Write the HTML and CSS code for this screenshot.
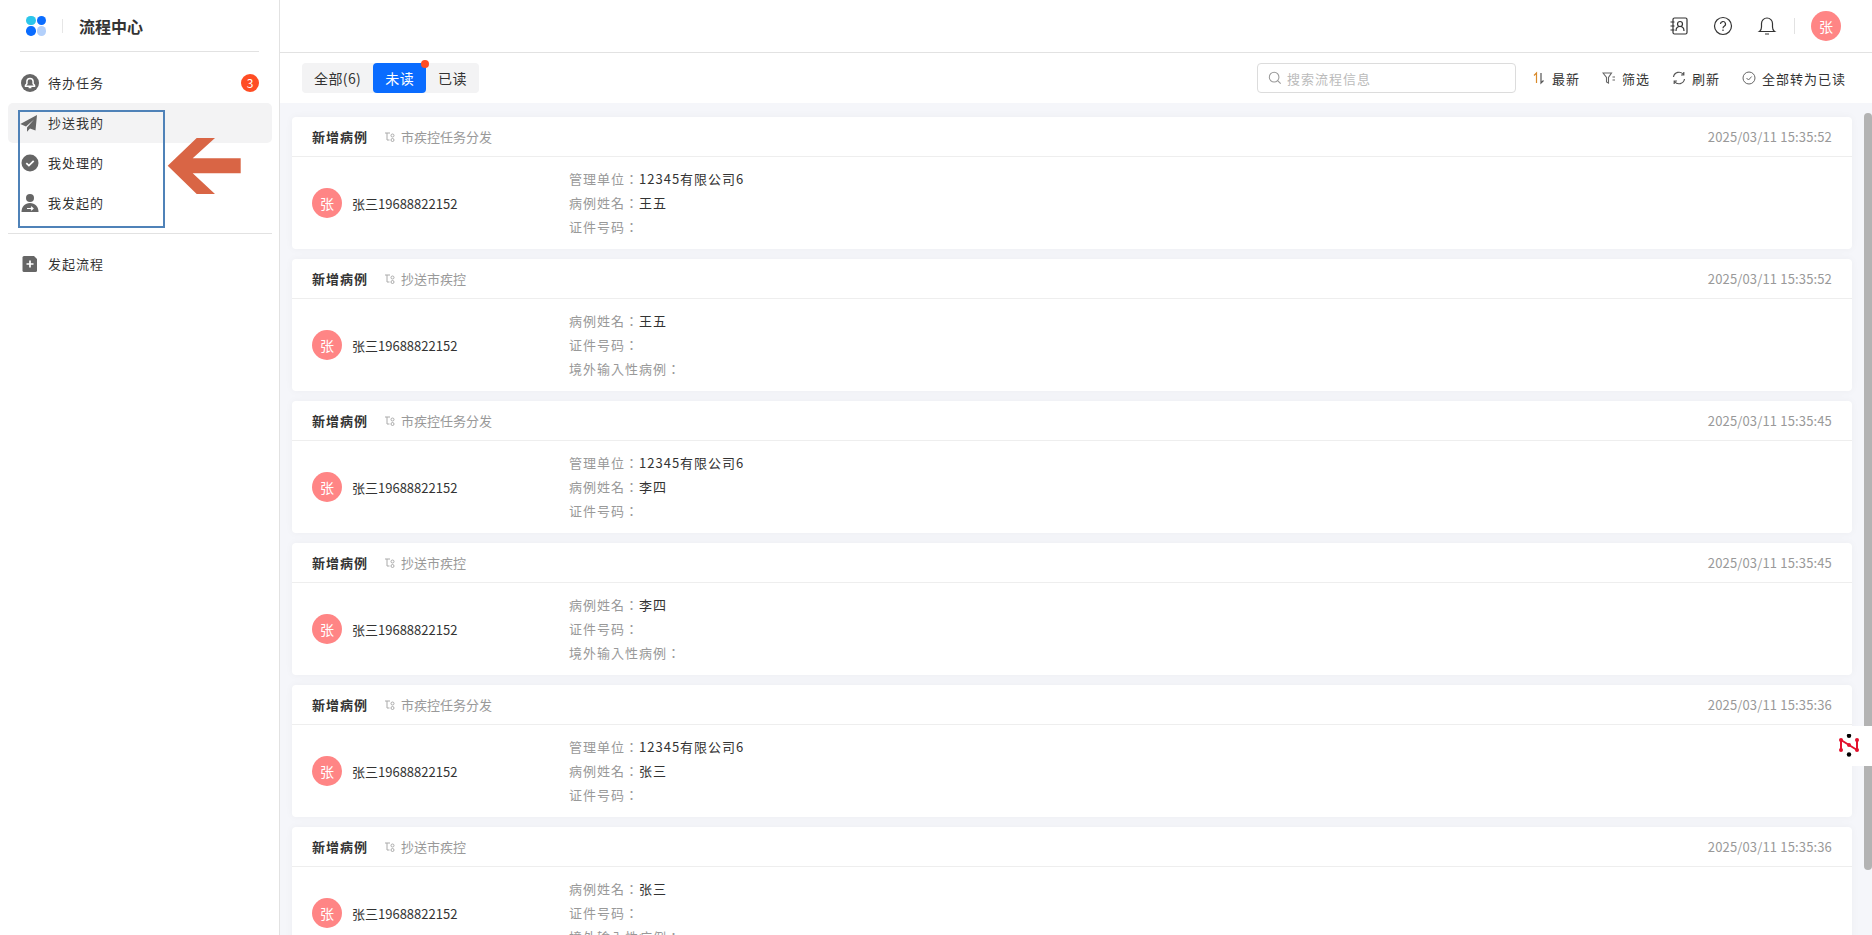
FILE: index.html
```html
<!DOCTYPE html>
<html lang="zh-CN">

<head>
  <meta charset="UTF-8">
  <title>流程中心</title>
  <link rel="stylesheet" href="styles.css">
</head>

<body>
  <aside class="sidebar">
    <div class="brand">
      <div class="logo"><i class="dot-a"></i><i class="dot-b"></i><i class="dot-b"></i><i class="dot-c"></i></div>
      <span class="brand-line"></span>
      <span class="brand-name">流程中心</span>
    </div>
    <nav class="menu">
      <a class="menu-item">
        <svg class="menu-icon" viewBox="0 0 20 20"><circle cx="10" cy="10" r="9" fill="#666"/><path d="M5.500 13.200h9v-1l-1.400-1.500V8.600a3.100 3.100 0 0 0-6.200 0v2.100l-1.400 1.500z" fill="none" stroke="#fff" stroke-width="1.500"/><path d="M8.600 14.600h2.800" stroke="#fff" stroke-width="1.300"/></svg>
        <span>待办任务</span>
        <b class="count">3</b>
      </a>
      <a class="menu-item active">
        <svg class="menu-icon" viewBox="0 0 20 20"><path d="M17 2 .3 11l5.700 2.500L14 6.500 7 14.500v4.300l3-3.300 5.500 2z" fill="#666"/></svg>
        <span>抄送我的</span>
      </a>
      <a class="menu-item">
        <svg class="menu-icon" viewBox="0 0 20 20"><circle cx="10" cy="10" r="8.500" fill="#666"/><path d="m6.300 10.200 2.600 2.400 4.800-4.700" fill="none" stroke="#fff" stroke-width="1.800"/></svg>
        <span>我处理的</span>
      </a>
      <a class="menu-item">
        <svg class="menu-icon" viewBox="0 0 20 20"><circle cx="10" cy="5" r="4" fill="#666"/><path d="M1.500 19c0-5.500 3.500-9 8.500-9s8.500 3.500 8.500 9z" fill="#666"/><path d="M7 15.500h6m-2-1.800 2 1.800-2 1.800" fill="none" stroke="#fff" stroke-width="1.200"/></svg>
        <span>我发起的</span>
      </a>
    </nav>
    <div class="menu-line"></div>
    <nav class="menu">
      <a class="menu-item">
        <svg class="menu-icon" viewBox="0 0 20 20"><path d="M4 2h10l3 3v11.500a1.500 1.500 0 0 1-1.500 1.500h-11.500a1.500 1.500 0 0 1-1.500-1.500V3.500A1.500 1.500 0 0 1 4 2z" fill="#666"/><path d="M10 6.500v7M6.500 10h7" stroke="#fff" stroke-width="1.700"/></svg>
        <span>发起流程</span>
      </a>
    </nav>
    <div class="mark-box"></div>
    <svg class="mark-arrow" viewBox="0 0 74 58"><path d="M.7 28.700 29.700 1H48L25.700 21.300h48v15h-48L48 57H29.700z" fill="#d96545"/></svg>
  </aside>

  <main class="main">
    <header class="topbar">
      <svg class="top-icon" viewBox="0 0 20 20" fill="none" stroke="#333" stroke-width="1.200"><rect x="4" y="2" width="14" height="16" rx="1.500"/><circle cx="11" cy="8" r="2.500"/><path d="M7 15c0-3 1.500-4.500 4-4.500s4 1.500 4 4.500M1.500 6h4M1.500 10h4M1.500 14h4"/></svg>
      <svg class="top-icon" viewBox="0 0 20 20" fill="none" stroke="#333" stroke-width="1.200"><circle cx="10" cy="10" r="8.500"/><path d="M7.500 8a2.500 2.500 0 1 1 3.700 2.200c-.8.500-1.200 1-1.200 2"/><path d="M10 13.500v1.500"/></svg>
      <svg class="top-icon" viewBox="0 0 20 20" fill="none" stroke="#333" stroke-width="1.200"><path d="M2.500 15.500h15c-1.500-1-2-2.500-2-4.500V7.500a5.500 5.500 0 0 0-11 0V11c0 2-.5 3.500-2 4.500zM8 18h4"/></svg>
      <span class="top-line"></span>
      <span class="avatar">张</span>
    </header>

    <div class="toolbar">
      <div class="tabs">
        <span class="tab">全部(6)</span>
        <span class="tab on">未读<i class="tab-dot"></i></span>
        <span class="tab">已读</span>
      </div>
      <div class="tools">
        <div class="search">
          <svg class="search-icon" viewBox="0 0 16 16" fill="none" stroke="#999" stroke-width="1.200"><circle cx="7" cy="7" r="5.500"/><path d="m11 11 3.500 3.500"/></svg>
          <span>搜索流程信息</span>
        </div>
        <span class="tool">
          <svg viewBox="0 0 14 14" fill="none" stroke-width="1.200"><path d="M2 4.500 4.500 2v10" stroke="#d98a2b"/><path d="M9 2v10l2.500-2.500" stroke="#555"/></svg>
          最新
        </span>
        <span class="tool">
          <svg viewBox="0 0 14 14" fill="none" stroke="#666" stroke-width="1.100"><path d="M1 2h8.500L6.500 6.500V12L4.500 11V6.500zM10.500 6H13M10.500 9H13"/></svg>
          筛选
        </span>
        <span class="tool">
          <svg viewBox="0 0 14 14" fill="none" stroke="#555" stroke-width="1.200"><path d="M1.500 6A5.600 5.600 0 0 1 11.500 3.500M12.500 8A5.600 5.600 0 0 1 2.500 10.500M11.800 1v3H9M2.200 13v-3H5"/></svg>
          刷新
        </span>
        <span class="tool">
          <svg viewBox="0 0 14 14" fill="none" stroke="#666" stroke-width="1"><circle cx="7" cy="7" r="6"/><path d="m4.500 7 2 2 3.200-3.500"/></svg>
          全部转为已读
        </span>
      </div>
    </div>

    <div class="list">
      <section class="card">
        <div class="card-head">
          <b class="card-title">新增病例</b>
          <svg class="node-icon" viewBox="0 0 12 12" fill="none" stroke="#aaa"><path d="M1 2h5M3 2v7h2.500"/><circle cx="8.500" cy="4.500" r="1.500"/><circle cx="8.500" cy="9" r="1.500"/></svg>
          <span class="card-node">市疾控任务分发</span>
          <time class="card-time">2025/03/11 15:35:52</time>
        </div>
        <div class="card-body">
          <div class="user"><span class="avatar">张</span><span class="user-name">张三19688822152</span></div>
          <div class="fields">
            <p><span lang="zh-TW">管理单位：</span>12345有限公司6</p>
            <p><span lang="zh-TW">病例姓名：</span>王五</p>
            <p><span lang="zh-TW">证件号码：</span></p>
          </div>
        </div>
      </section>

      <section class="card">
        <div class="card-head">
          <b class="card-title">新增病例</b>
          <svg class="node-icon" viewBox="0 0 12 12" fill="none" stroke="#aaa"><path d="M1 2h5M3 2v7h2.500"/><circle cx="8.500" cy="4.500" r="1.500"/><circle cx="8.500" cy="9" r="1.500"/></svg>
          <span class="card-node">抄送市疾控</span>
          <time class="card-time">2025/03/11 15:35:52</time>
        </div>
        <div class="card-body">
          <div class="user"><span class="avatar">张</span><span class="user-name">张三19688822152</span></div>
          <div class="fields">
            <p><span lang="zh-TW">病例姓名：</span>王五</p>
            <p><span lang="zh-TW">证件号码：</span></p>
            <p><span lang="zh-TW">境外输入性病例：</span></p>
          </div>
        </div>
      </section>

      <section class="card">
        <div class="card-head">
          <b class="card-title">新增病例</b>
          <svg class="node-icon" viewBox="0 0 12 12" fill="none" stroke="#aaa"><path d="M1 2h5M3 2v7h2.500"/><circle cx="8.500" cy="4.500" r="1.500"/><circle cx="8.500" cy="9" r="1.500"/></svg>
          <span class="card-node">市疾控任务分发</span>
          <time class="card-time">2025/03/11 15:35:45</time>
        </div>
        <div class="card-body">
          <div class="user"><span class="avatar">张</span><span class="user-name">张三19688822152</span></div>
          <div class="fields">
            <p><span lang="zh-TW">管理单位：</span>12345有限公司6</p>
            <p><span lang="zh-TW">病例姓名：</span>李四</p>
            <p><span lang="zh-TW">证件号码：</span></p>
          </div>
        </div>
      </section>

      <section class="card">
        <div class="card-head">
          <b class="card-title">新增病例</b>
          <svg class="node-icon" viewBox="0 0 12 12" fill="none" stroke="#aaa"><path d="M1 2h5M3 2v7h2.500"/><circle cx="8.500" cy="4.500" r="1.500"/><circle cx="8.500" cy="9" r="1.500"/></svg>
          <span class="card-node">抄送市疾控</span>
          <time class="card-time">2025/03/11 15:35:45</time>
        </div>
        <div class="card-body">
          <div class="user"><span class="avatar">张</span><span class="user-name">张三19688822152</span></div>
          <div class="fields">
            <p><span lang="zh-TW">病例姓名：</span>李四</p>
            <p><span lang="zh-TW">证件号码：</span></p>
            <p><span lang="zh-TW">境外输入性病例：</span></p>
          </div>
        </div>
      </section>

      <section class="card">
        <div class="card-head">
          <b class="card-title">新增病例</b>
          <svg class="node-icon" viewBox="0 0 12 12" fill="none" stroke="#aaa"><path d="M1 2h5M3 2v7h2.500"/><circle cx="8.500" cy="4.500" r="1.500"/><circle cx="8.500" cy="9" r="1.500"/></svg>
          <span class="card-node">市疾控任务分发</span>
          <time class="card-time">2025/03/11 15:35:36</time>
        </div>
        <div class="card-body">
          <div class="user"><span class="avatar">张</span><span class="user-name">张三19688822152</span></div>
          <div class="fields">
            <p><span lang="zh-TW">管理单位：</span>12345有限公司6</p>
            <p><span lang="zh-TW">病例姓名：</span>张三</p>
            <p><span lang="zh-TW">证件号码：</span></p>
          </div>
        </div>
      </section>

      <section class="card">
        <div class="card-head">
          <b class="card-title">新增病例</b>
          <svg class="node-icon" viewBox="0 0 12 12" fill="none" stroke="#aaa"><path d="M1 2h5M3 2v7h2.500"/><circle cx="8.500" cy="4.500" r="1.500"/><circle cx="8.500" cy="9" r="1.500"/></svg>
          <span class="card-node">抄送市疾控</span>
          <time class="card-time">2025/03/11 15:35:36</time>
        </div>
        <div class="card-body">
          <div class="user"><span class="avatar">张</span><span class="user-name">张三19688822152</span></div>
          <div class="fields">
            <p><span lang="zh-TW">病例姓名：</span>张三</p>
            <p><span lang="zh-TW">证件号码：</span></p>
            <p><span lang="zh-TW">境外输入性病例：</span></p>
          </div>
        </div>
      </section>
    </div>

    <div class="scroll-thumb"></div>

    <div class="float-tool">
      <svg viewBox="0 0 20 24"><path d="M2 6v10M18 6v10M2 6l16 10" stroke="#e3112d" stroke-width="2"/><g fill="#e3112d"><circle cx="2" cy="6" r="2"/><circle cx="18" cy="6" r="2"/><circle cx="2" cy="16" r="2"/><circle cx="18" cy="16" r="2"/><circle cx="10" cy="11" r="2"/></g><circle cx="10" cy="1.800" r="2.200"/><circle cx="10" cy="20.500" r="2.200"/></svg>
    </div>
  </main>
</body>

</html>
```

FILE: styles.css
```css
* {
  box-sizing: border-box;
}

html,
body {
  height: 100%;
}

body {
  margin: 0;
  display: flex;
  overflow: hidden;
  font-family: "Noto Sans CJK SC", "Noto Sans", sans-serif;
  font-size: 13px;
  color: #333;
  background-color: #fff;
}

/* sidebar */
.sidebar {
  position: relative;
  width: 280px;
  flex-shrink: 0;
  border-right: 1px solid #e2e2e2;
}

.brand {
  height: 52px;
  margin: 0 20px;
  display: flex;
  align-items: center;
  border-bottom: 1px solid #e2e2e2;
}

.logo {
  width: 20px;
  margin-left: 6px;
  display: grid;
  grid-template-columns: 9.5px 9.5px;
  gap: 1px;
}

.logo i {
  height: 9.5px;
  border-radius: 50%;
}

.dot-a {
  background-color: #2cc6ea;
}

.dot-b {
  background-color: #0a6cff;
}

.dot-c {
  background-color: #b3d0fb;
}

.brand-line {
  width: 1px;
  height: 14px;
  margin: 0 16px;
  background-color: #e6e6e6;
}

.brand-name {
  font-size: 16px;
  font-weight: 700;
  color: #333;
}

.menu {
  margin: 11px 7px 0 8px;
}

.menu-item {
  height: 40px;
  padding: 0 13px 0 12px;
  display: flex;
  align-items: center;
  border-radius: 5px;
  letter-spacing: 1px;
}

.menu-item span {
  margin-bottom: 2px;
}

.menu-item.active {
  background-color: #f3f3f4;
}

.menu-icon {
  width: 20px;
  height: 20px;
  margin-right: 8px;
  flex-shrink: 0;
}

.count {
  width: 18px;
  height: 18px;
  margin-left: auto;
  border-radius: 50%;
  background-color: #ff4d24;
  color: #fff;
  font-size: 12px;
  font-weight: 400;
  line-height: 18px;
  text-align: center;
  letter-spacing: 0;
}

.menu-line {
  height: 1px;
  margin: 10px 7px 0 8px;
  background-color: #e2e2e2;
}

.menu-line + .menu {
  margin-top: 10px;
}

.mark-box {
  position: absolute;
  left: 18px;
  top: 110px;
  width: 147px;
  height: 118px;
  border: 2px solid #4f82b8;
}

.mark-arrow {
  position: absolute;
  left: 167px;
  top: 137px;
  width: 74px;
  height: 58px;
}

/* right side */
.main {
  position: relative;
  flex: 1;
  min-width: 0;
  display: flex;
  flex-direction: column;
}

.topbar {
  height: 53px;
  padding-right: 31px;
  display: flex;
  align-items: center;
  justify-content: flex-end;
  gap: 24px;
  border-bottom: 1px solid #e2e2e2;
  flex-shrink: 0;
}

.top-icon {
  width: 20px;
  height: 20px;
}

.top-line {
  width: 1px;
  height: 16px;
  margin: 0 -8px 0 -7px;
  background-color: #e2e2e2;
}

.avatar {
  width: 30px;
  height: 30px;
  border-radius: 50%;
  background-color: #ff8585;
  color: #fff;
  font-size: 14px;
  line-height: 30px;
  text-align: center;
  flex-shrink: 0;
}

.toolbar {
  height: 50px;
  padding: 0 26px 0 22px;
  display: flex;
  align-items: center;
  justify-content: space-between;
  flex-shrink: 0;
}

.tabs {
  height: 30px;
  display: flex;
  border-radius: 4px;
  background-color: #f3f3f4;
  font-size: 14px;
  letter-spacing: .4px;
}

.tab {
  position: relative;
  padding: 0 12px;
  line-height: 30px;
  border-radius: 4px;
}

.tab.on {
  background-color: #0a6cff;
  color: #fff;
}

.tab-dot {
  position: absolute;
  right: -3px;
  top: -3px;
  width: 8px;
  height: 8px;
  border-radius: 50%;
  background-color: #ff4d24;
}

.tools {
  display: flex;
  align-items: center;
  gap: 22px;
}

.search {
  width: 259px;
  height: 30px;
  margin-right: -6px;
  padding: 0 10px;
  display: flex;
  align-items: center;
  gap: 5px;
  border: 1px solid #dcdcdc;
  border-radius: 4px;
  color: #bbb;
  letter-spacing: 1px;
}

.search-icon {
  width: 14px;
  height: 14px;
}

.tool {
  display: flex;
  align-items: center;
  gap: 6px;
  letter-spacing: 1px;
}

.tool svg {
  width: 14px;
  height: 14px;
}

.list {
  flex: 1;
  min-height: 0;
  padding: 14px 20px 0 12px;
  overflow: hidden;
  background-color: #f5f6fa;
}

.scroll-thumb {
  position: absolute;
  right: 0;
  top: 113px;
  width: 8px;
  height: 757px;
  border-radius: 4px;
  background-color: #b3b3b3;
}

.card {
  height: 132px;
  margin-bottom: 10px;
  border-radius: 4px;
  background-color: #fff;
  box-shadow: 0 0 8px rgba(0, 0, 0, .04);
}

.card-head {
  height: 40px;
  padding: 0 20px;
  display: flex;
  align-items: center;
  border-bottom: 1px solid #eee;
}

.card-title {
  font-weight: 700;
  letter-spacing: 1px;
}

.node-icon {
  width: 12px;
  height: 12px;
  margin: 0 5px 0 16px;
}

.card-node {
  color: #999;
}

.card-time {
  margin-left: auto;
  color: #999;
  letter-spacing: .15px;
}

.card-body {
  height: 92px;
  padding: 0 20px;
  display: flex;
  align-items: center;
}

.user {
  width: 257px;
  display: flex;
  align-items: center;
  gap: 10px;
}

.fields {
  letter-spacing: 1px;
}

.fields p {
  margin: 0;
  line-height: 24px;
}

/* the TC cut centres the full-width colon */
.fields span {
  color: #999;
  font-family: "Noto Sans CJK TC", "Noto Sans", sans-serif;
}

.float-tool {
  position: absolute;
  right: 0;
  top: 726px;
  width: 45px;
  height: 40px;
  padding-left: 12px;
  display: flex;
  align-items: center;
  border-radius: 20px 0 0 20px;
  background-color: #fff;
}

.float-tool svg {
  width: 20px;
  height: 24px;
}
```
